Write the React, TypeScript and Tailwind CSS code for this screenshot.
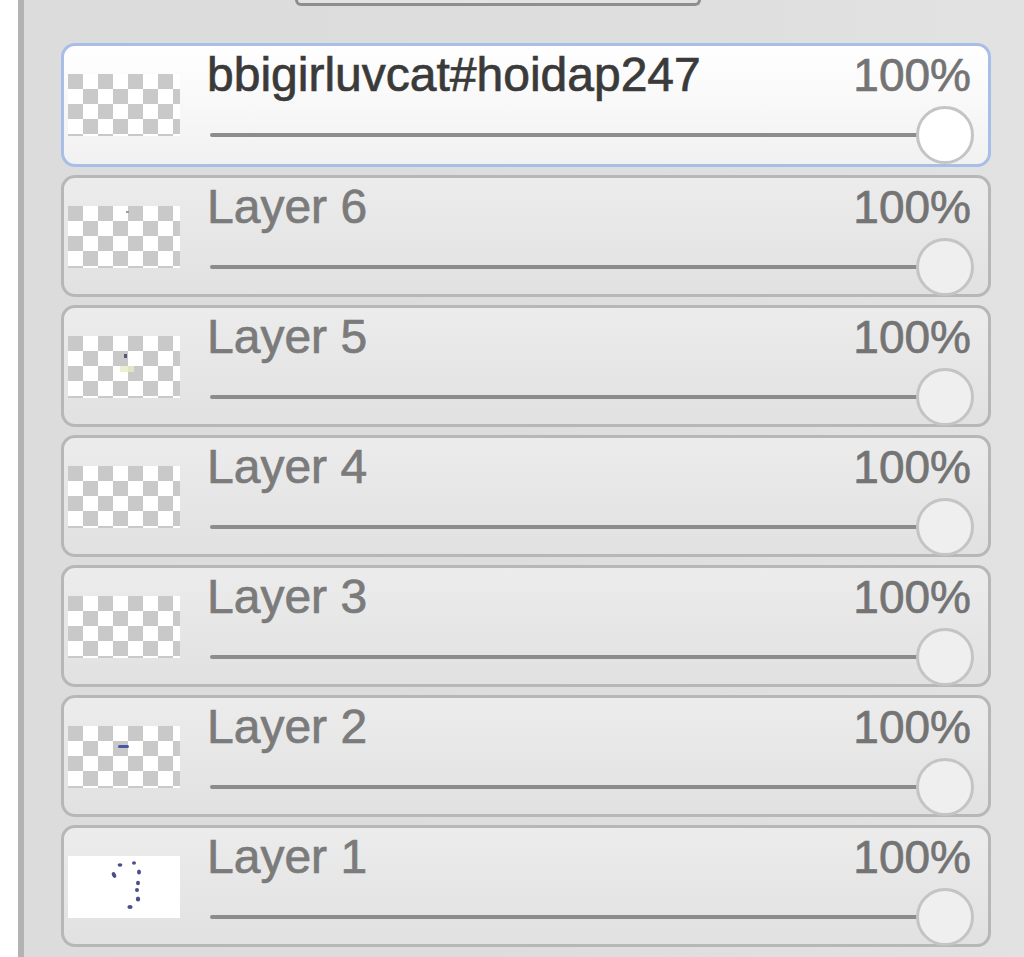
import React from "react";

interface Layer {
  name: string;
  opacity: number;
  selected?: boolean;
  thumb: "empty" | "dot6" | "dot5" | "dash2" | "white1";
}

const layers: Layer[] = [
  { name: "bbigirluvcat#hoidap247", opacity: 100, selected: true, thumb: "empty" },
  { name: "Layer 6", opacity: 100, thumb: "dot6" },
  { name: "Layer 5", opacity: 100, thumb: "dot5" },
  { name: "Layer 4", opacity: 100, thumb: "empty" },
  { name: "Layer 3", opacity: 100, thumb: "empty" },
  { name: "Layer 2", opacity: 100, thumb: "dash2" },
  { name: "Layer 1", opacity: 100, thumb: "white1" },
];

function Thumb({ kind }: { kind: Layer["thumb"] }) {
  if (kind === "white1") {
    return (
      <div className="w-[112px] h-[62px] bg-white shrink-0">
        <svg width="112" height="62" viewBox="0 0 112 62">
          <g fill="#4a4e8c">
            <ellipse cx="46" cy="19" rx="2" ry="3" transform="rotate(-25 46 19)" />
            <ellipse cx="52" cy="9" rx="2.4" ry="1.8" />
            <ellipse cx="66" cy="7" rx="2" ry="1.8" />
            <ellipse cx="71" cy="16" rx="2" ry="2.6" />
            <ellipse cx="70" cy="27" rx="2" ry="2.2" />
            <ellipse cx="69" cy="34" rx="2" ry="2" />
            <ellipse cx="70" cy="43" rx="2.2" ry="2.6" />
            <ellipse cx="62" cy="51" rx="2.6" ry="2" />
          </g>
        </svg>
      </div>
    );
  }
  return (
    <div className="relative w-[112px] h-[62px] shrink-0 bg-[conic-gradient(#ffffff_25%,#c9c9c9_0_50%,#ffffff_0_75%,#c9c9c9_0)] bg-size-[30px_30px]">
      {kind === "dot6" && (
        <div className="absolute left-[58px] top-[5px] w-[3px] h-[2px] bg-[#9a9ab8]" />
      )}
      {kind === "dot5" && (
        <>
          <div className="absolute left-[56px] top-[18px] w-[3px] h-[4px] bg-[#55577a]" />
          <div className="absolute left-[52px] top-[30px] w-[14px] h-[6px] bg-[#e6ecc4] opacity-80" />
        </>
      )}
      {kind === "dash2" && (
        <div className="absolute left-[50px] top-[19px] w-[11px] h-[3px] rounded-full bg-[#4b55a8]" />
      )}
    </div>
  );
}

function LayerRow({ layer, first }: { layer: Layer; first: boolean }) {
  const rowCls = layer.selected
    ? "border-[#a8bde8] bg-linear-to-b from-[#ffffff] to-[#f1f1f1]"
    : "border-[#b7b7b7] bg-linear-to-b from-[#ececec] to-[#e1e1e1]";
  return (
    <div
      className={`relative flex border-[3px] rounded-[14px] ${rowCls} ${
        first ? "h-[124px]" : "h-[122px]"
      }`}
    >
      <div className="pl-[4px] pt-[28px]">
        <Thumb kind={layer.thumb} />
      </div>
      <div className="flex-1 flex flex-col pl-[27px] pr-[17px]">
        <div className="flex justify-between items-start pt-[5px] h-[48px] text-[48px] leading-[48px] [-webkit-text-stroke:0.7px_currentColor]">
          <span className={layer.selected ? "text-[#3a3a3a]" : "text-[#7b7b7b]"}>
            {layer.name}
          </span>
          <span className="text-[46px] text-[#747474]">{layer.opacity}%</span>
        </div>
        <div className="relative mt-[39px] h-[4px] ml-[3px] mr-[26px]">
          <div className="h-[4px] rounded-full bg-[#8c8c8c]" style={{ width: `${layer.opacity}%` }} />
          <div
            className={`absolute right-[-29px] top-1/2 -translate-y-1/2 w-[58px] h-[58px] rounded-full border-[3px] border-[#c4c4c4] ${
              layer.selected ? "bg-white" : "bg-[#efefef]"
            }`}
          />
        </div>
      </div>
    </div>
  );
}

export default function App() {
  return (
    <div className="flex w-[1024px] h-[957px] overflow-hidden bg-white font-['Liberation_Sans',Arial,sans-serif]">
      <div className="w-[18px] shrink-0 bg-white" />
      <div className="w-[6px] shrink-0 bg-[#b3b3b3]" />
      <div className="flex-1 relative bg-linear-to-r from-[#dcdcdc] via-[#dddddd] to-[#e2e2e2]">
        <div className="ml-[271px] w-[406px] h-[7px] border-[3px] border-t-0 border-[#8e8e8e] rounded-b-[6px] bg-[#e3e3e3] -mt-px" />
        <div className="flex flex-col gap-[8px] pt-[37px] pl-[37px] w-[967px]">
          {layers.map((l, i) => (
            <LayerRow key={l.name} layer={l} first={i === 0} />
          ))}
        </div>
      </div>
    </div>
  );
}
